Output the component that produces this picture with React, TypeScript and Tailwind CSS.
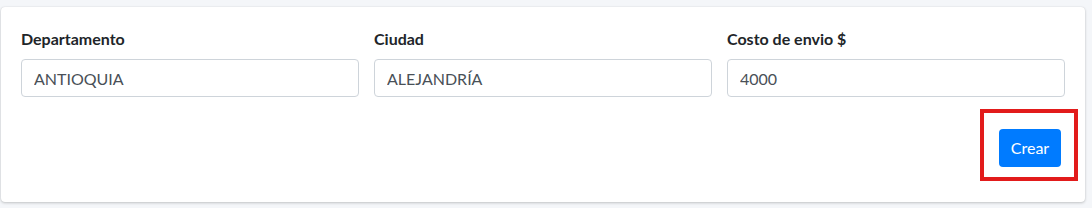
export default function App() {
  return (
    <div className="h-[208px] w-[1092px] bg-[#f4f6f9] pt-[7px] pl-[1px] font-['Lato',sans-serif]">
      <div className="w-[1084px] h-[195px] rounded bg-white shadow-[0_0_1px_rgba(0,0,0,0.125),0_1px_3px_rgba(0,0,0,0.2)] px-5 pt-5">
        <div className="grid grid-cols-3 gap-[15px]">
          {[
            ["Departamento", "ANTIOQUIA"],
            ["Ciudad", "ALEJANDRÍA"],
            ["Costo de envio $", "4000"],
          ].map(([label, value]) => (
            <div key={label} className="flex flex-col">
              <label className="text-base leading-6 font-bold text-[#212529] mb-2">
                {label}
              </label>
              <input
                readOnly
                value={value}
                className="h-[38px] rounded border border-[#ced4da] px-3 text-base text-[#495057] outline-none"
              />
            </div>
          ))}
        </div>
        <div className="flex justify-end mt-8 pr-1">
          <div className="relative">
            <button className="h-[38px] w-[62px] rounded bg-[#007bff] text-base text-white">
              Crear
            </button>
            <div className="absolute -left-[19px] -top-[20px] -right-[17px] -bottom-[14px] border-4 border-[#e21b1b]" />
          </div>
        </div>
      </div>
    </div>
  );
}
